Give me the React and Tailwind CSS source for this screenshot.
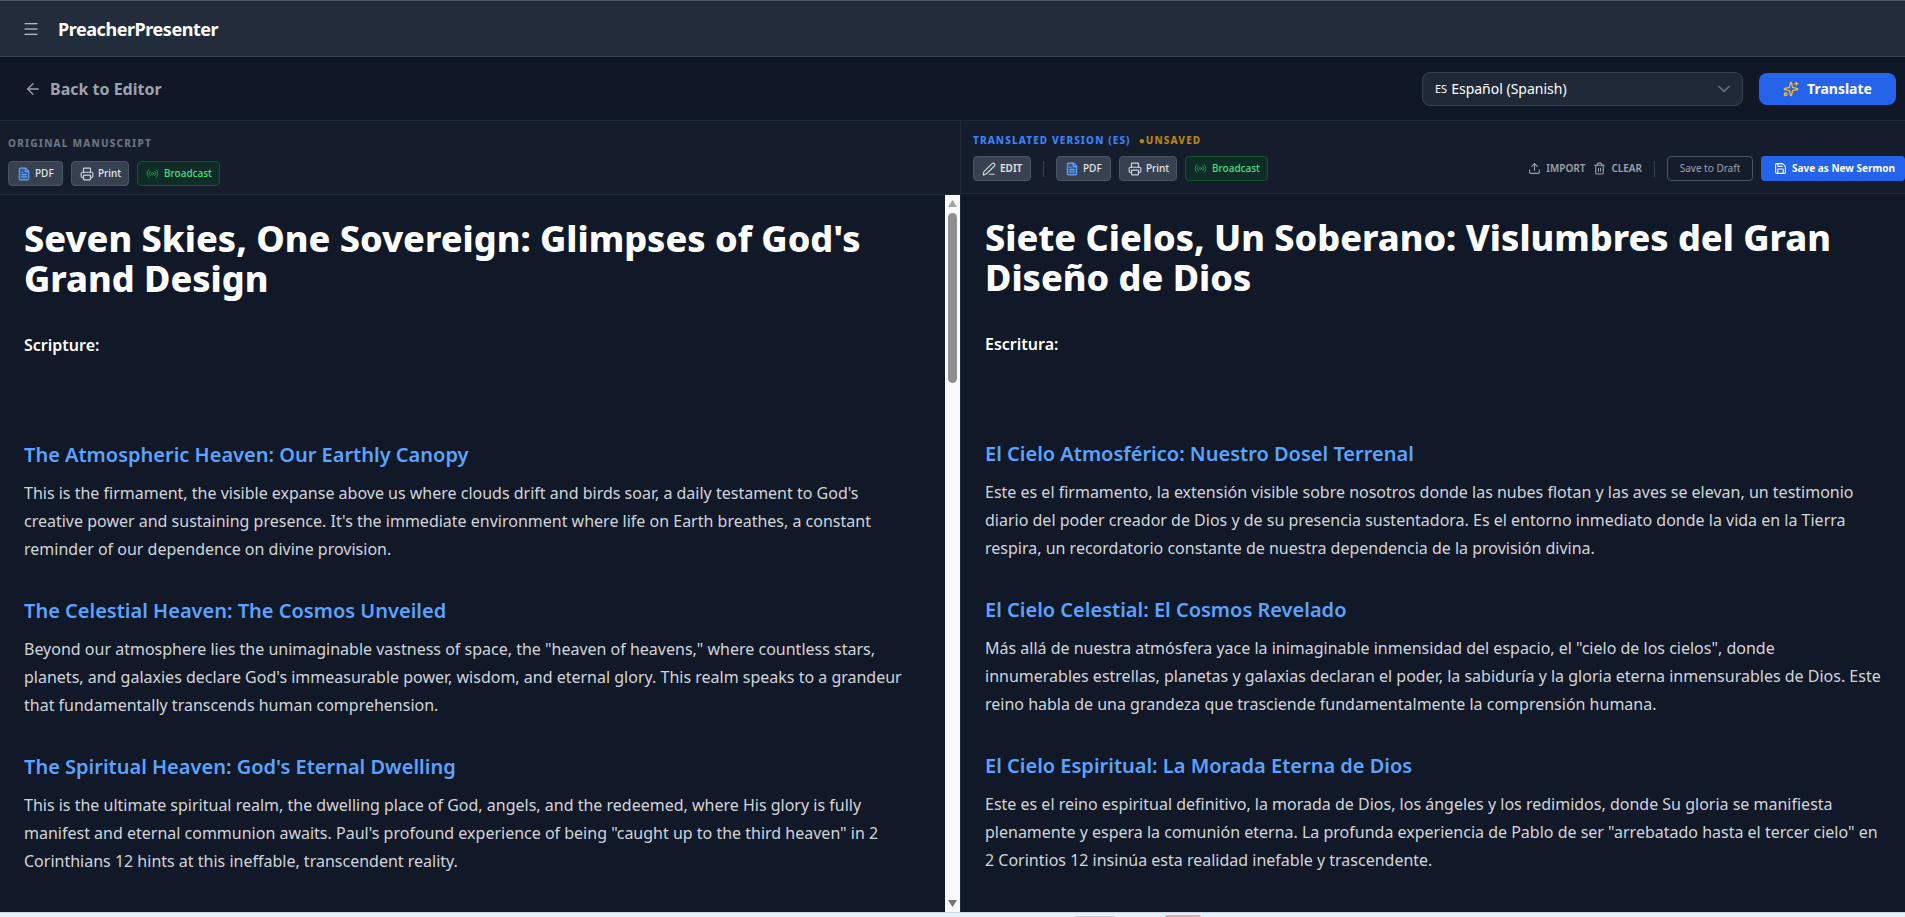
import React from "react";
import { Menu, ArrowLeft, ChevronDown, Sparkles, FileText, Printer, Radio, PenLine, Upload, Trash2, Save } from "lucide-react";

function ToolBtn({ children, variant = "gray", className = "" }) {
  const c = variant === "green"
    ? "gap-[5px] bg-[#0f2d26] border-[#14532d] text-[#4ade80]"
    : "gap-[4px] bg-[#374151] border-[#4b5563] text-[#e5e7eb]";
  return (
    <button className={`flex h-[25px] items-center rounded border px-2 text-[10px] font-medium ${c} ${className}`}>
      {children}
    </button>
  );
}

function ExportBtns() {
  return (
    <>
      <ToolBtn className="w-[55px]">
        <FileText size={14} className="shrink-0 text-[#60a5fa] fill-[#3b82f6]/40" />
        PDF
      </ToolBtn>
      <ToolBtn className="w-[58px]">
        <Printer size={14} className="shrink-0 text-[#d1d5db]" />
        Print
      </ToolBtn>
      <ToolBtn variant="green" className="w-[83px]">
        <Radio size={13} strokeWidth={1.75} className="shrink-0 text-[#22c55e]/70" />
        Broadcast
      </ToolBtn>
    </>
  );
}

function Sermon({ title, scripture, sections }) {
  return (
    <div className="min-h-0 min-w-0 flex-1 overflow-hidden p-6">
      <h1 className="mb-8 text-4xl font-extrabold text-white">{title}</h1>
      <p className="mb-[82px] text-base leading-7 font-semibold text-white">{scripture}</p>
      {sections.map(([h, p]) => (
        <section key={h} className="mb-[34px]">
          <h2 className="mb-[10px] text-xl font-semibold text-[#5ba3ff]">{h}</h2>
          <p className="text-base leading-7 text-[#d1d5db]">{p}</p>
        </section>
      ))}
    </div>
  );
}

const en = [
  ["The Atmospheric Heaven: Our Earthly Canopy", "This is the firmament, the visible expanse above us where clouds drift and birds soar, a daily testament to God's creative power and sustaining presence. It's the immediate environment where life on Earth breathes, a constant reminder of our dependence on divine provision."],
  ["The Celestial Heaven: The Cosmos Unveiled", "Beyond our atmosphere lies the unimaginable vastness of space, the \"heaven of heavens,\" where countless stars, planets, and galaxies declare God's immeasurable power, wisdom, and eternal glory. This realm speaks to a grandeur that fundamentally transcends human comprehension."],
  ["The Spiritual Heaven: God's Eternal Dwelling", "This is the ultimate spiritual realm, the dwelling place of God, angels, and the redeemed, where His glory is fully manifest and eternal communion awaits. Paul's profound experience of being \"caught up to the third heaven\" in 2 Corinthians 12 hints at this ineffable, transcendent reality."],
];
const es = [
  ["El Cielo Atmosférico: Nuestro Dosel Terrenal", "Este es el firmamento, la extensión visible sobre nosotros donde las nubes flotan y las aves se elevan, un testimonio diario del poder creador de Dios y de su presencia sustentadora. Es el entorno inmediato donde la vida en la Tierra respira, un recordatorio constante de nuestra dependencia de la provisión divina."],
  ["El Cielo Celestial: El Cosmos Revelado", "Más allá de nuestra atmósfera yace la inimaginable inmensidad del espacio, el \"cielo de los cielos\", donde innumerables estrellas, planetas y galaxias declaran el poder, la sabiduría y la gloria eterna inmensurables de Dios. Este reino habla de una grandeza que trasciende fundamentalmente la comprensión humana."],
  ["El Cielo Espiritual: La Morada Eterna de Dios", "Este es el reino espiritual definitivo, la morada de Dios, los ángeles y los redimidos, donde Su gloria se manifiesta plenamente y espera la comunión eterna. La profunda experiencia de Pablo de ser \"arrebatado hasta el tercer cielo\" en 2 Corintios 12 insinúa esta realidad inefable y trascendente."],
];

function Scrollbar() {
  return (
    <div className="flex w-[15px] shrink-0 flex-col items-center bg-[#fafafa]">
      <svg width="9" height="7" viewBox="0 0 9 7" className="mt-[5px] shrink-0">
        <path d="M4.5 0 L9 7 L0 7 Z" fill="#a3a3a3" />
      </svg>
      <div className="mt-[6px] h-[170px] w-[9px] shrink-0 rounded-full bg-[#8f8f8f]" />
      <div className="flex-1" />
      <svg width="9" height="7" viewBox="0 0 9 7" className="mb-[5px] shrink-0">
        <path d="M0 0 L9 0 L4.5 7 Z" fill="#737373" />
      </svg>
    </div>
  );
}

export default function App() {
  return (
    <div className="flex h-[917px] w-[1905px] flex-col overflow-hidden bg-[#111827] font-['Noto_Sans',sans-serif]">
      <header className="flex h-[57px] shrink-0 items-center gap-[18px] border-t border-b border-t-[#4b5563] border-b-[#374151] bg-[#232c3b] pl-[22px]">
        <Menu size={18} strokeWidth={1.5} className="text-[#e5e7eb]" />
        <span className="text-lg font-bold tracking-tight text-white">PreacherPresenter</span>
      </header>

      <div className="flex h-[64px] shrink-0 items-center justify-between border-b border-[#1f2937] bg-[#101726] pr-[9px] pl-[24px]">
        <div className="flex items-center gap-[8px] text-[#9ca3af]">
          <ArrowLeft size={18} strokeWidth={1.75} />
          <span className="text-base font-bold">Back to Editor</span>
        </div>
        <div className="flex items-center gap-4">
          <div className="flex h-[34px] w-[321px] items-center justify-between rounded-lg border border-[#374151] bg-[#1f2937] pr-[8px] pl-[12px] text-sm text-white">
            <span className="flex items-center gap-[4px]"><span className="text-[11px]">ES</span> Español (Spanish)</span>
            <ChevronDown size={20} className="text-[#6b7280]" />
          </div>
          <button className="flex h-[32px] w-[137px] items-center justify-center gap-2 rounded-lg bg-[#2563eb] text-sm font-bold text-white">
            <Sparkles size={16} className="text-[#fbbf24]" />
            Translate
          </button>
        </div>
      </div>

      <main className="flex min-h-0 flex-1">
        <div className="flex w-[960px] shrink-0 flex-col">
          <div className="flex h-[74px] shrink-0 flex-col border-b border-[#1f2937] bg-[#151d2d] pt-[15px] pl-2">
            <div className="text-[10px] leading-[14px] font-extrabold tracking-[0.12em] text-[#6b7280]">ORIGINAL MANUSCRIPT</div>
            <div className="mt-[11px] flex gap-2"><ExportBtns /></div>
          </div>
          <div className="flex min-h-0 flex-1">
            <Sermon title="Seven Skies, One Sovereign: Glimpses of God's Grand Design" scripture="Scripture:" sections={en} />
            <Scrollbar />
          </div>
        </div>
        <div className="flex min-w-0 flex-1 flex-col border-l border-[#1f2937]">
          <div className="flex h-[73px] shrink-0 flex-col border-b border-[#1f2937] bg-[#151d2d] pt-[12px] pl-3">
            <div className="flex items-center gap-2 text-[10px] leading-[14px] font-extrabold tracking-[0.11em]">
              <span className="text-[#3b82f6]">TRANSLATED VERSION (ES)</span>
              <span className="text-[#b7860f]">●UNSAVED</span>
            </div>
            <div className="mt-[9px] flex items-center">
              <ToolBtn className="w-[58px] font-semibold"><PenLine size={14} className="shrink-0 text-[#d1d5db]" />EDIT</ToolBtn>
              <div className="mx-3 h-4 w-px bg-[#374151]" />
              <div className="flex gap-2"><ExportBtns /></div>
              <div className="ml-auto flex items-center">
                <span className="flex items-center gap-[5px] text-[10px] font-semibold text-[#9ca3af]"><Upload size={13} />IMPORT</span>
                <span className="ml-2 flex items-center gap-[5px] text-[10px] font-semibold text-[#9ca3af]"><Trash2 size={13} />CLEAR</span>
                <div className="mx-3 h-4 w-px bg-[#374151]" />
                <button className="h-[25px] w-[86px] rounded border border-[#4b5563] text-[10px] text-[#9ca3af]">Save to Draft</button>
                <button className="ml-2 flex h-[25px] w-[144px] items-center gap-[5px] rounded bg-[#2563eb] pl-[13px] text-[10px] font-bold whitespace-nowrap text-white"><Save size={13} className="shrink-0" />Save as New Sermon</button>
              </div>
            </div>
          </div>
          <Sermon title="Siete Cielos, Un Soberano: Vislumbres del Gran Diseño de Dios" scripture="Escritura:" sections={es} />
        </div>
      </main>

      <div className="flex h-[5px] shrink-0 items-end border-t border-[#cbd5e1] bg-[#e8f0f8]">
        <div className="ml-[1075px] h-px w-[40px] rounded-t bg-[#c4cbd4]" />
        <div className="ml-[50px] h-[2px] w-[36px] rounded-t bg-[#eba8a8]" />
      </div>
    </div>
  );
}
